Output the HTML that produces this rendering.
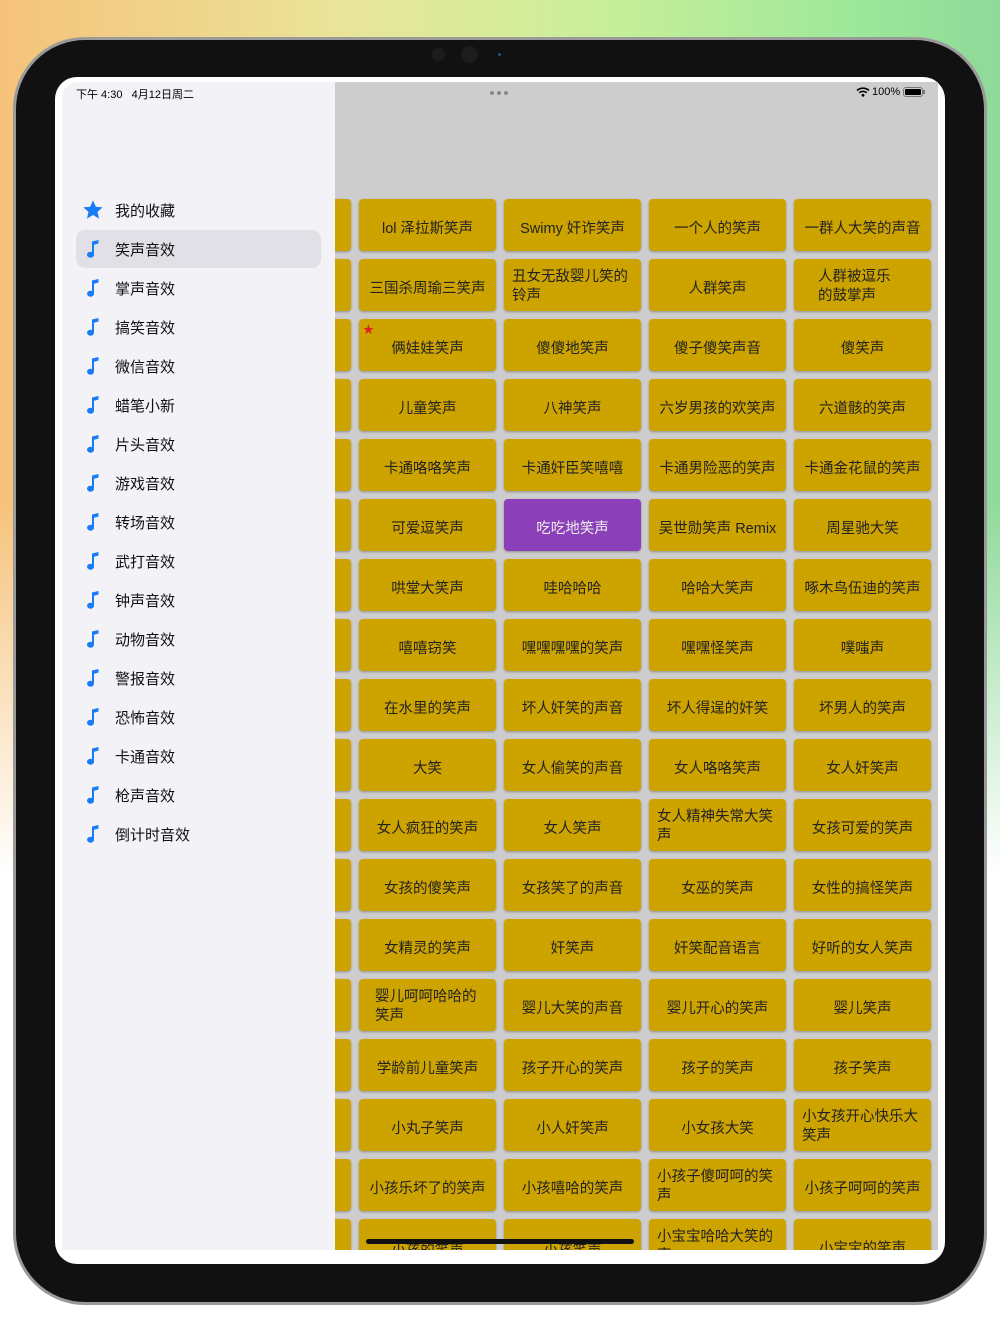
<!DOCTYPE html>
<html><head><meta charset="utf-8">
<style>
*{margin:0;padding:0;box-sizing:border-box}
body{width:1000px;height:1334px;position:relative;overflow:hidden;background:#fff;font-family:"Liberation Sans","Noto Sans CJK SC",sans-serif}
.bg{position:absolute;left:0;top:0;width:1000px;height:1000px;background:linear-gradient(90deg,#f6c27a 0%,#e9e59a 35%,#c9ef9a 60%,#9ee89a 85%,#8fd99a 100%)}
.bg2{position:absolute;left:0;top:500px;width:1000px;height:834px;background:linear-gradient(180deg,rgba(255,255,255,0),#fff 45%)}
.dev{position:absolute;left:13px;top:37px;width:974px;height:1268px;border-radius:72px;background:#111;border:3px solid #9a9a9a}
.scrw{position:absolute;left:55px;top:77px;width:890px;height:1187px;background:#fff;border-radius:22px;overflow:hidden}
.side{position:absolute;left:62px;top:82px;width:273px;height:1168px;background:#f2f2f7;border-top-left-radius:16px}
.main{position:absolute;left:335px;top:82px;width:603px;height:1168px;background:#cdcdcd;overflow:hidden}
.st{position:absolute;font-size:11px;color:#000}
.item{position:absolute;left:76px;width:245px;height:38px;font-size:15px;color:#111;display:flex;align-items:center}
.item span{position:absolute;left:39px}
.item svg{position:absolute;left:10px}
.sel{background:#e0e0e6;border-radius:9px}
.grid{position:absolute;left:24px;top:117px;display:grid;grid-template-columns:repeat(4,137px);grid-auto-rows:52px;column-gap:8px;row-gap:8px}
.b{background:#cda300;border-radius:4px;box-shadow:0 1px 2px rgba(0,0,0,.3);font-size:14.5px;color:#222;display:flex;align-items:center;justify-content:center;text-align:center;padding-top:5px;position:relative;white-space:nowrap}
.w{white-space:normal;text-align:left;justify-content:flex-start;padding:4px 8px 0 8px;line-height:19px}
.p{background:#8b3fb8;color:#eee}
.part{position:absolute;left:0;width:16px;height:52px;background:#cda300;border-radius:0 4px 4px 0;box-shadow:0 1px 2px rgba(0,0,0,.3)}
.home{position:absolute;left:366px;top:1239px;width:268px;height:5px;border-radius:3px;background:#111}
</style></head><body>
<div class="bg"></div><div class="bg2"></div>
<div class="dev"></div>
<div style="position:absolute;left:432px;top:48px;width:13px;height:13px;border-radius:50%;background:#1c1c1c"></div>
<div style="position:absolute;left:461px;top:46px;width:17px;height:17px;border-radius:50%;background:#1c1c1c"></div>
<div style="position:absolute;left:498px;top:53px;width:3px;height:3px;border-radius:50%;background:#2a4a8a"></div>
<div class="scrw"></div>
<div class="side"></div>
<div class="main">
<div class="grid">
<div class="b">lol 泽拉斯笑声</div><div class="b">Swimy 奸诈笑声</div><div class="b">一个人的笑声</div><div class="b">一群人大笑的声音</div>
<div class="b">三国杀周瑜三笑声</div><div class="b w">丑女无敌婴儿笑的铃声</div><div class="b">人群笑声</div><div class="b w" style="padding-left:24px;padding-right:30px">人群被逗乐的鼓掌声</div>
<div class="b"><span style="position:absolute;left:4px;top:2px;color:#e02020;font-size:11px">★</span>俩娃娃笑声</div><div class="b">傻傻地笑声</div><div class="b">傻子傻笑声音</div><div class="b">傻笑声</div>
<div class="b">儿童笑声</div><div class="b">八神笑声</div><div class="b">六岁男孩的欢笑声</div><div class="b">六道骸的笑声</div>
<div class="b">卡通咯咯笑声</div><div class="b">卡通奸臣笑嘻嘻</div><div class="b">卡通男险恶的笑声</div><div class="b">卡通金花鼠的笑声</div>
<div class="b">可爱逗笑声</div><div class="b p">吃吃地笑声</div><div class="b">吴世勋笑声 Remix</div><div class="b">周星驰大笑</div>
<div class="b">哄堂大笑声</div><div class="b">哇哈哈哈</div><div class="b">哈哈大笑声</div><div class="b">啄木鸟伍迪的笑声</div>
<div class="b">嘻嘻窃笑</div><div class="b">嘿嘿嘿嘿的笑声</div><div class="b">嘿嘿怪笑声</div><div class="b">噗嗤声</div>
<div class="b">在水里的笑声</div><div class="b">坏人奸笑的声音</div><div class="b">坏人得逞的奸笑</div><div class="b">坏男人的笑声</div>
<div class="b">大笑</div><div class="b">女人偷笑的声音</div><div class="b">女人咯咯笑声</div><div class="b">女人奸笑声</div>
<div class="b">女人疯狂的笑声</div><div class="b">女人笑声</div><div class="b w">女人精神失常大笑声</div><div class="b">女孩可爱的笑声</div>
<div class="b">女孩的傻笑声</div><div class="b">女孩笑了的声音</div><div class="b">女巫的笑声</div><div class="b">女性的搞怪笑声</div>
<div class="b">女精灵的笑声</div><div class="b">奸笑声</div><div class="b">奸笑配音语言</div><div class="b">好听的女人笑声</div>
<div class="b w" style="padding-left:16px">婴儿呵呵哈哈的笑声</div><div class="b">婴儿大笑的声音</div><div class="b">婴儿开心的笑声</div><div class="b">婴儿笑声</div>
<div class="b">学龄前儿童笑声</div><div class="b">孩子开心的笑声</div><div class="b">孩子的笑声</div><div class="b">孩子笑声</div>
<div class="b">小丸子笑声</div><div class="b">小人奸笑声</div><div class="b">小女孩大笑</div><div class="b w">小女孩开心快乐大笑声</div>
<div class="b">小孩乐坏了的笑声</div><div class="b">小孩嘻哈的笑声</div><div class="b w">小孩子傻呵呵的笑声</div><div class="b">小孩子呵呵的笑声</div>
<div class="b" style="align-items:flex-start;padding-top:20px">小孩的笑声</div><div class="b" style="align-items:flex-start;padding-top:20px">小孩笑声</div><div class="b w">小宝宝哈哈大笑的声</div><div class="b" style="align-items:flex-start;padding-top:18px">小宝宝的笑声</div>
</div>
<div id="parts"></div>
</div>
<script>
var p='';for(var i=0;i<18;i++){p+='<div class="part" style="top:'+(117+i*60)+'px"></div>';}
document.getElementById('parts').innerHTML=p;
</script>
<div class="st" style="left:76px;top:86px">下午 4:30&nbsp;&nbsp;&nbsp;4月12日周二</div>
<div style="position:absolute;left:490px;top:91px;font-size:0">
<span style="display:inline-block;width:4px;height:4px;border-radius:50%;background:#888;margin-right:3px"></span><span style="display:inline-block;width:4px;height:4px;border-radius:50%;background:#888;margin-right:3px"></span><span style="display:inline-block;width:4px;height:4px;border-radius:50%;background:#888"></span></div>
<svg style="position:absolute;left:856px;top:87px" width="14" height="10" viewBox="0 0 14 10"><path d="M1 3.5a9 9 0 0 1 12 0" stroke="#000" stroke-width="1.6" fill="none"/><path d="M3.3 5.8a5.5 5.5 0 0 1 7.4 0" stroke="#000" stroke-width="1.6" fill="none"/><circle cx="7" cy="8.3" r="1.4"/></svg>
<div class="st" style="left:872px;top:86px">100%</div>
<div style="position:absolute;left:903px;top:87px;width:20px;height:10px;border:1px solid #777;border-radius:3px;padding:1px"><div style="width:100%;height:100%;background:#000;border-radius:1px"></div></div>
<div style="position:absolute;left:923px;top:90px;width:2px;height:4px;background:#777"></div>
<div class="item" style="top:191px"><svg width="22" height="22" viewBox="0 0 24 24" style="left:6px"><path d="M12 1.5l3.1 7 7.4.6-5.6 4.9 1.7 7.4L12 17.5 5.4 21.4l1.7-7.4L1.5 9.1l7.4-.6z" fill="#1a7cf5"/></svg><span>我的收藏</span></div>
<div class="item sel" style="top:230px"></div>
<div id="items"></div>
<script>
var n=["笑声音效","掌声音效","搞笑音效","微信音效","蜡笔小新","片头音效","游戏音效","转场音效","武打音效","钟声音效","动物音效","警报音效","恐怖音效","卡通音效","枪声音效","倒计时音效"];
var h='';for(var i=0;i<n.length;i++){h+='<div class="item" style="top:'+(230+i*39)+'px"><svg width="14" height="20" viewBox="0 0 14 20"><path d="M6 2.5 L12.5 1 L12.5 4.5 L8 5.8 L8 15.5 A3.5 3 0 1 1 6 13 Z" fill="#1a7cf5"/></svg><span>'+n[i]+'</span></div>';}
document.getElementById('items').innerHTML=h;
</script>
<div class="home"></div>
</body></html>
